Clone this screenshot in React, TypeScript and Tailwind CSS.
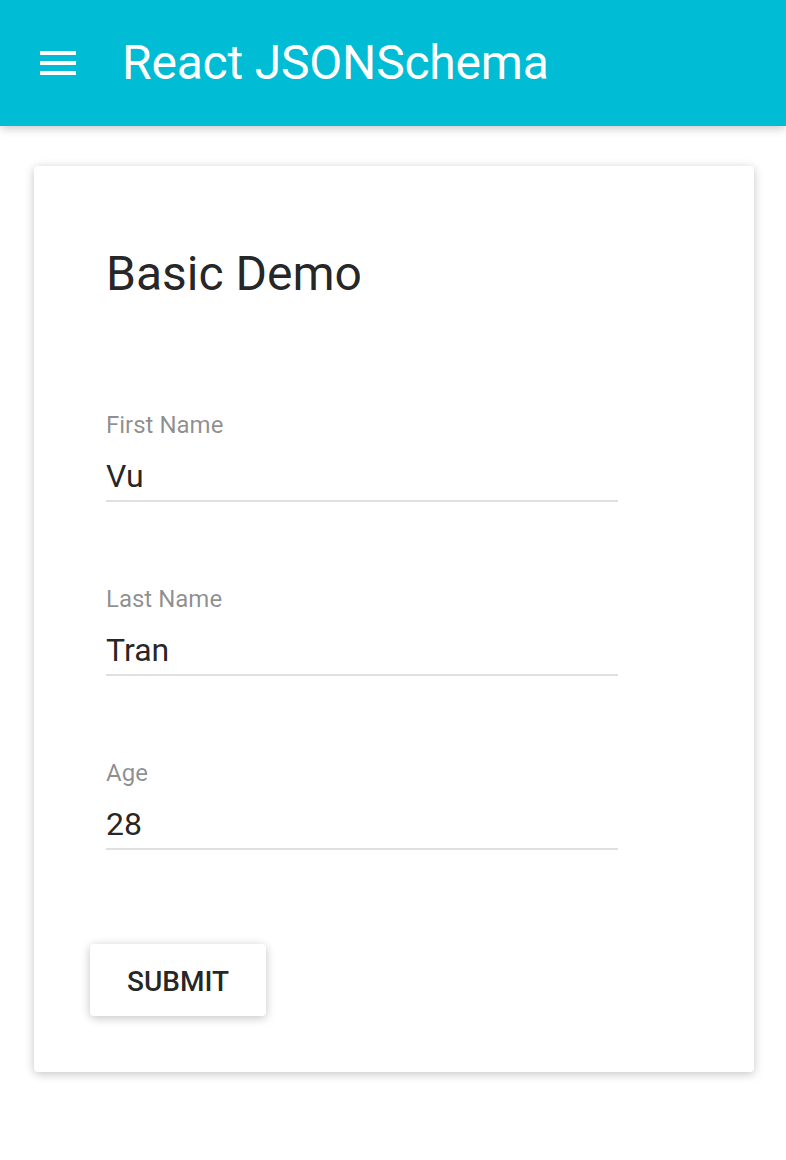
import React from "react";

function Field({ label, value }: { label: string; value: string }) {
  return (
    <div className="w-[512px]">
      <div className="text-[24px] leading-none text-[rgba(0,0,0,0.45)]">{label}</div>
      <div className="mt-[23.5px] text-[32px] leading-none text-[rgba(0,0,0,0.87)]">{value}</div>
      <div className="mt-[8px] h-[2px] bg-[#e0e0e0]" />
    </div>
  );
}

export default function App() {
  return (
    <div className="min-h-[1160px] bg-white" style={{ fontFamily: "Roboto, 'Noto Sans', sans-serif" }}>
      <header className="relative z-10 flex h-[126px] items-center bg-[#00bcd4] pl-[34px] shadow-[0_2px_12px_rgba(0,0,0,0.12),0_2px_8px_rgba(0,0,0,0.12)]">
        <svg width="48" height="48" viewBox="0 0 24 24" fill="#ffffff">
          <path d="M3 18h18v-2H3v2zm0-5h18v-2H3v2zm0-7v2h18V6H3z" />
        </svg>
        <h1 className="ml-[40px] text-[48px] font-normal leading-none text-white tracking-[-0.2px]">React JSONSchema</h1>
      </header>
      <main className="pl-[34px] pt-[40px]">
        <div className="flex h-[906px] w-[720px] flex-col rounded-[4px] bg-white pl-[72px] pt-[83.5px] shadow-[0_2px_12px_rgba(0,0,0,0.12),0_2px_8px_rgba(0,0,0,0.12)]">
          <h2 className="text-[48px] font-normal leading-none text-[rgba(0,0,0,0.87)]">Basic Demo</h2>
          <div className="mt-[115px] flex flex-col gap-[84.5px]">
            <Field label="First Name" value="Vu" />
            <Field label="Last Name" value="Tran" />
            <Field label="Age" value="28" />
          </div>
          <button className="-ml-[16px] mt-[94px] flex h-[72px] w-[176px] items-center justify-center rounded-[4px] bg-white pt-[4px] text-[28px] font-medium uppercase text-[rgba(0,0,0,0.87)] shadow-[0_2px_12px_rgba(0,0,0,0.12),0_2px_8px_rgba(0,0,0,0.12)]">
            Submit
          </button>
        </div>
      </main>
    </div>
  );
}
